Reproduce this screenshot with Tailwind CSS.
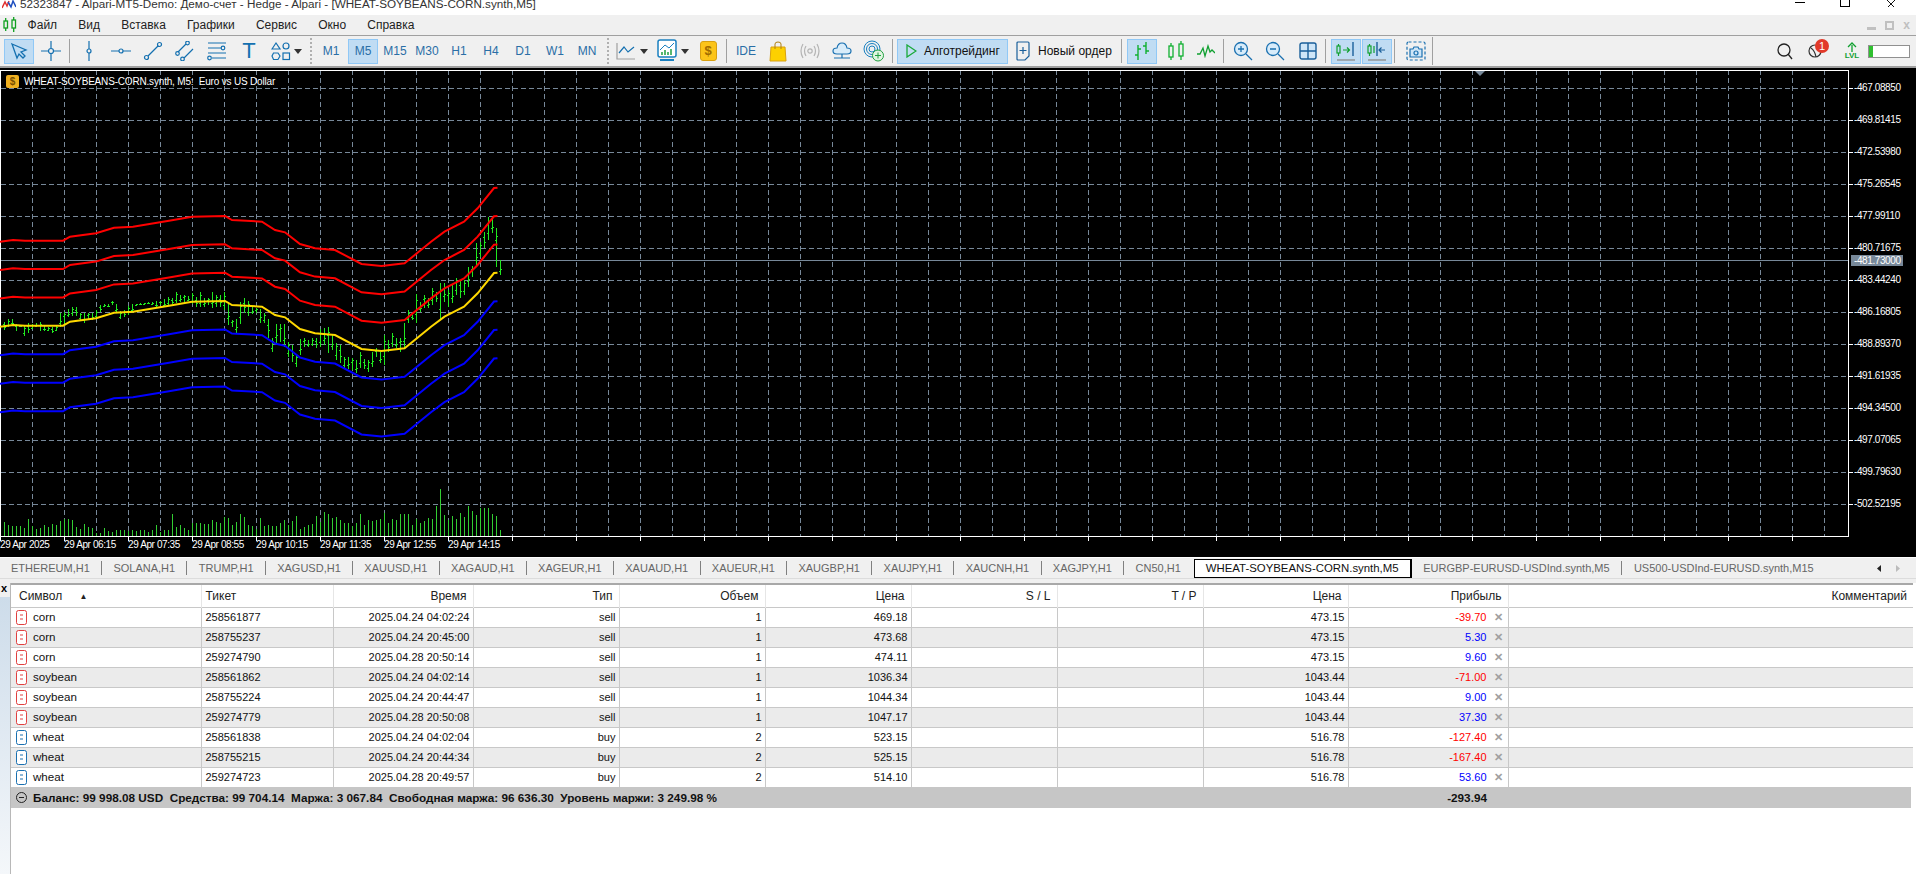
<!DOCTYPE html>
<html lang="ru">
<head>
  <meta charset="UTF-8" />
  <title>Alpari MT5 - WHEAT-SOYBEANS-CORN</title>
  <script src="https://cdn.jsdelivr.net/npm/@tailwindcss/browser@4"></script>
</head>
<body class="w-[1916px] h-[874px] overflow-hidden bg-white text-[#111] text-[11px] font-['Liberation_Sans',sans-serif] flex flex-col">

  <!-- Title bar (cut off at the top) -->
  <div class="h-[15px] shrink-0 relative overflow-hidden flex items-start pl-[2px]">
    <svg class="w-[14px] h-[10px] -mt-px" viewBox="0 0 14 10" fill="none" stroke-width="1.5"><path d="M0 9L3 3L5 7L7 2" stroke="#e03030"/><path d="M6 3L9 8L11 2L14 8" stroke="#2050c0"/></svg>
    <span class="ml-[4px] -mt-[3px] text-[11.7px] leading-[14px] text-[#333] whitespace-nowrap">52323847 - Alpari-MT5-Demo: Демо-счет - Hedge - Alpari - [WHEAT-SOYBEANS-CORN.synth,M5]</span>
    <div class="absolute top-0 left-[1795px] w-[10px] h-px mt-[2px] bg-black"></div>
    <div class="absolute top-0 left-[1840px] w-[10px] h-[7px] border border-t-0 border-black"></div>
    <svg class="absolute top-0 left-[1886px] w-[10px] h-[8px]" viewBox="0 0 10 8" stroke="#111"><path d="M1 0L8 7M9 0L2 7"/></svg>
  </div>

  <!-- Menu -->
  <div class="h-[21px] shrink-0 bg-[#f0f0f0] border-b border-[#a0a0a0] flex items-center relative text-[12px] text-[#222]">
    <svg class="w-[16px] h-[16px] ml-[2px]" viewBox="0 0 16 16" fill="none" stroke="#10a020" stroke-width="1.3"><rect x="2" y="4" width="3.5" height="7"/><path d="M3.7 1V4M3.7 11V14"/><rect x="10" y="3" width="3.5" height="8"/><path d="M11.7 0V3M11.7 11V15"/></svg>
    <div class="flex ml-[-1px]">
      <span class="px-[10.6px]">Файл</span>
      <span class="px-[10.6px]">Вид</span>
      <span class="px-[10.6px]">Вставка</span>
      <span class="px-[10.6px]">Графики</span>
      <span class="px-[10.6px]">Сервис</span>
      <span class="px-[10.6px]">Окно</span>
      <span class="px-[10.6px]">Справка</span>
    </div>
    <div class="ml-auto mr-[6px] flex items-center gap-[9px]">
      <div class="w-[9px] h-[3px] bg-[#c0c0c0] mt-[6px]"></div>
      <div class="w-[9px] h-[9px] border-2 border-[#c0c0c0]"></div>
      <span class="font-bold text-[#c0c0c0]">x</span>
    </div>
  </div>

  <!-- Toolbar -->
  <div class="h-[30px] shrink-0 bg-[#f0f0f0] flex items-center pl-[4px] text-[#2a6ea6] text-[12px]">
    <button class="w-[30px] h-[25px] mr-[2px] flex items-center justify-center bg-[#c0dcf3] border border-[#90c8f6]">
      <svg class="w-[20px] h-[20px]" viewBox="0 0 20 20" fill="none" stroke="#1470b0" stroke-width="1.3"><path d="M3 3L17 9L12 11L16 15L14 17L10 13L8 17Z"/></svg>
    </button>
    <button class="w-[30px] h-[25px] mr-[2px] flex items-center justify-center">
      <svg class="w-[20px] h-[20px]" viewBox="0 0 20 20" fill="none" stroke="#1470b0" stroke-width="1.2"><path d="M10 0V7M10 13V20M0 10H7M13 10H20"/><circle cx="10" cy="10" r="2.5"/></svg>
    </button>
    <div class="ml-px mr-[4px] w-px h-[24px] bg-[#a0a0a0]"></div>
    <button class="w-[30px] h-[25px] mr-[2px] flex items-center justify-center">
      <svg class="w-[20px] h-[20px]" viewBox="0 0 20 20" fill="none" stroke="#1470b0" stroke-width="1.2"><path d="M10 0V8M10 12V20"/><circle cx="10" cy="10" r="2"/></svg>
    </button>
    <button class="w-[30px] h-[25px] mr-[2px] flex items-center justify-center">
      <svg class="w-[20px] h-[20px]" viewBox="0 0 20 20" fill="none" stroke="#1470b0" stroke-width="1.2"><path d="M0 10H8M12 10H20"/><circle cx="10" cy="10" r="2"/></svg>
    </button>
    <button class="w-[30px] h-[25px] mr-[2px] flex items-center justify-center">
      <svg class="w-[20px] h-[20px]" viewBox="0 0 20 20" fill="none" stroke="#1470b0" stroke-width="1.2"><path d="M5 15L15 5"/><circle cx="3.5" cy="16.5" r="2"/><circle cx="16.5" cy="3.5" r="2"/></svg>
    </button>
    <button class="w-[30px] h-[25px] mr-[2px] flex items-center justify-center">
      <svg class="w-[20px] h-[20px]" viewBox="0 0 20 20" fill="none" stroke="#1470b0" stroke-width="1.2"><path d="M3 11L11 3M9 17L18 8"/><circle cx="2.5" cy="12.5" r="1.8"/><circle cx="12.5" cy="2" r="1.8"/><circle cx="7.5" cy="18" r="1.8"/></svg>
    </button>
    <button class="w-[30px] h-[25px] mr-[2px] flex items-center justify-center">
      <svg class="w-[20px] h-[20px]" viewBox="0 0 20 20" fill="none" stroke="#1470b0" stroke-width="1.2"><path d="M1 2H19M1 7H14M1 12H19M5 17H19"/><circle cx="16" cy="7" r="1.8"/><circle cx="2.5" cy="17" r="1.8"/></svg>
    </button>
    <button class="w-[30px] h-[25px] mr-[2px] flex items-center justify-center text-[22px] font-light text-[#1470b0] leading-none">T</button>
    <button class="w-[30px] h-[25px] flex items-center justify-center">
      <svg class="w-[20px] h-[20px]" viewBox="0 0 20 20" fill="none" stroke="#1470b0" stroke-width="1.2"><path d="M5 2L9 8H1Z"/><circle cx="15" cy="5" r="3"/><path d="M2.5 12H7L9 15L7 18.5H2.5L1 15Z"/><rect x="12" y="12" width="6.5" height="6.5"/></svg>
    </button>
    <svg class="w-[8px] h-[5px] -ml-[2px]" viewBox="0 0 8 5" fill="#333"><path d="M0 0H8L4 5Z"/></svg>
    <div class="ml-[8px] w-[2px] h-[26px] border-l-2 border-dotted border-[#b0b0b0]"></div>

    <div class="ml-[4px] flex font-medium">
      <button class="w-[30px] h-[25px] mr-[2px]">M1</button>
      <button class="w-[30px] h-[25px] mr-[2px] bg-[#c0dcf3] border border-[#90c8f6]">M5</button>
      <button class="w-[30px] h-[25px] mr-[2px]">M15</button>
      <button class="w-[30px] h-[25px] mr-[2px]">M30</button>
      <button class="w-[30px] h-[25px] mr-[2px]">H1</button>
      <button class="w-[30px] h-[25px] mr-[2px]">H4</button>
      <button class="w-[30px] h-[25px] mr-[2px]">D1</button>
      <button class="w-[30px] h-[25px] mr-[2px]">W1</button>
      <button class="w-[30px] h-[25px] mr-[2px]">MN</button>
    </div>
    <div class="ml-[3px] w-[2px] h-[26px] border-l-2 border-dotted border-[#b0b0b0]"></div>

    <button class="ml-[2px] w-[30px] h-[25px] flex items-center justify-center">
      <svg class="w-[20px] h-[20px]" viewBox="0 0 20 20" fill="none" stroke-width="1.2"><path d="M1 2V18H19" stroke="#a0a0a0"/><path d="M3 12L8 6L12 11L18 6" stroke="#1470b0"/></svg>
    </button>
    <svg class="w-[8px] h-[5px] -ml-[1px]" viewBox="0 0 8 5" fill="#333"><path d="M0 0H8L4 5Z"/></svg>
    <button class="ml-[4px] w-[30px] h-[25px] flex items-center justify-center">
      <svg class="w-[22px] h-[24px]" viewBox="0 0 22 24" fill="none"><rect x="2" y="1" width="18" height="17" rx="2" fill="#fff" stroke="#1a80c0" stroke-width="1.5"/><path d="M4 11L9 6L13 9L18 4" stroke="#1a80c0"/><path d="M6 16V13M9 16V11M12 16V13M15 16V10" stroke="#20a040" stroke-width="1.5"/><path d="M4 21H18" stroke="#1a80c0" stroke-width="2"/></svg>
    </button>
    <svg class="w-[8px] h-[5px] -ml-[1px]" viewBox="0 0 8 5" fill="#333"><path d="M0 0H8L4 5Z"/></svg>
    <button class="ml-[4px] mr-[2px] w-[30px] h-[25px] flex items-center justify-center">
      <span class="w-[17px] h-[20px] rounded-[3px] bg-[#fcc419] border border-[#d8a010] text-[#a06a00] font-bold text-[13px] leading-[18px]">$</span>
    </button>
    <div class="ml-px mr-[4px] w-px h-[24px] bg-[#a0a0a0]"></div>

    <button class="w-[30px] h-[25px] mr-[2px] font-medium">IDE</button>
    <button class="w-[30px] h-[25px] mr-[2px] flex items-center justify-center">
      <svg class="w-[18px] h-[21px]" viewBox="0 0 18 21" fill="none"><path d="M2 6H16L17 20H1Z" fill="#fdd000" stroke="#d8a010"/><path d="M6 8V3Q6 1 9 1T12 3V8" stroke="#b08010"/></svg>
    </button>
    <button class="w-[30px] h-[25px] mr-[2px] flex items-center justify-center">
      <svg class="w-[20px] h-[20px]" viewBox="0 0 20 20" fill="none" stroke="#b4b4b4" stroke-width="1.2"><circle cx="10" cy="10" r="2.2"/><path d="M6 5Q3 10 6 15M14 5Q17 10 14 15M3 3Q-1 10 3 17M17 3Q21 10 17 17"/></svg>
    </button>
    <button class="w-[30px] h-[25px] mr-[2px] flex items-center justify-center">
      <svg class="w-[20px] h-[20px]" viewBox="0 0 20 20" fill="#d8ecfa" stroke="#1a70b0" stroke-width="1.2"><path d="M5 13Q1 13 1 10T5 7Q6 2 10 2T15 7Q19 7 19 10T15 13Z"/><path d="M10 13V17M2 17H18" fill="none"/></svg>
    </button>
    <button class="w-[30px] h-[25px] mr-[2px] flex items-center justify-center">
      <svg class="w-[22px] h-[22px]" viewBox="0 0 22 22" fill="none" stroke="#1a80c0"><circle cx="9" cy="9" r="8"/><circle cx="9" cy="9" r="5.5"/><circle cx="9" cy="9" r="3"/><circle cx="15" cy="15.5" r="5.5" fill="#e0f5e0" stroke="#20a040"/><path d="M15 12.5V18.5M12 15.5H18" stroke="#20a040"/></svg>
    </button>
    <div class="ml-px mr-[4px] w-px h-[24px] bg-[#a0a0a0]"></div>

    <button class="w-[111px] h-[25px] flex items-center bg-[#c0dcf3] border border-[#90c8f6] pl-[8px] text-[#111] gap-[7px]">
      <svg class="w-[11px] h-[14px] shrink-0" viewBox="0 0 11 14" fill="none" stroke="#18a838" stroke-width="1.3"><path d="M1 1L10 7L1 13Z"/></svg>
      Алготрейдинг
    </button>
    <button class="ml-[4px] w-[104px] h-[25px] flex items-center pl-[4px] text-[#111] gap-[8px]">
      <svg class="w-[14px] h-[20px] shrink-0" viewBox="0 0 14 20" fill="none" stroke="#1a5f9a" stroke-width="1.2"><path d="M1 2Q1 1 2 1H12Q13 1 13 2V15L9 19H2Q1 19 1 18Z"/><path d="M7 6V13M3.5 9.500H10.500"/></svg>
      Новый ордер
    </button>
    <div class="ml-[5px] w-px h-[24px] bg-[#a0a0a0]"></div>

    <button class="ml-[5px] mr-[2px] w-[30px] h-[25px] flex items-center justify-center bg-[#c0dcf3] border border-[#90c8f6]">
      <svg class="w-[18px] h-[20px]" viewBox="0 0 18 20" fill="none" stroke="#10b030" stroke-width="1.4"><path d="M5 4V19M5 8H8M2 14H5M13 1V13M10 5H13M13 10H16"/></svg>
    </button>
    <button class="ml-[2px] w-[30px] h-[25px] flex items-center justify-center">
      <svg class="w-[18px] h-[20px]" viewBox="0 0 18 20" fill="none" stroke="#10b030" stroke-width="1.3"><rect x="2" y="5" width="4" height="11"/><path d="M4 2V5M4 16V19"/><rect x="12" y="3" width="4" height="12"/><path d="M14 0V3M14 15V19"/></svg>
    </button>
    <button class="w-[30px] h-[25px] mr-[2px] flex items-center justify-center">
      <svg class="w-[18px] h-[14px]" viewBox="0 0 18 14" fill="none" stroke="#10a030" stroke-width="1.3"><path d="M0 10H3L6 4L8 12L11 2L13 8L15 6L18 9"/></svg>
    </button>
    <div class="w-px h-[24px] bg-[#a0a0a0]"></div>

    <button class="ml-[4px] mr-[2px] w-[30px] h-[25px] flex items-center justify-center">
      <svg class="w-[20px] h-[20px]" viewBox="0 0 20 20" fill="#d8ecfa" stroke="#1a70b0" stroke-width="1.3"><circle cx="8" cy="8" r="6.500"/><path d="M8 5V11M5 8H11M13 13L19 19" fill="none"/></svg>
    </button>
    <button class="w-[30px] h-[25px] mr-[2px] flex items-center justify-center">
      <svg class="w-[20px] h-[20px]" viewBox="0 0 20 20" fill="#d8ecfa" stroke="#1a70b0" stroke-width="1.3"><circle cx="8" cy="8" r="6.500"/><path d="M5 8H11M13 13L19 19" fill="none"/></svg>
    </button>
    <button class="ml-px mr-[2px] w-[30px] h-[25px] flex items-center justify-center">
      <svg class="w-[18px] h-[18px]" viewBox="0 0 18 18" fill="#cfe6f8" stroke="#1a5f9a" stroke-width="1.4"><rect x="1" y="1" width="16" height="16" rx="2"/><path d="M9 1V17M1 9H17" fill="none"/></svg>
    </button>
    <div class="w-px h-[24px] bg-[#a0a0a0]"></div>

    <button class="ml-[5px] w-[30px] h-[25px] flex items-center justify-center bg-[#c0dcf3] border border-[#90c8f6]">
      <svg class="w-[20px] h-[20px]" viewBox="0 0 20 20" fill="none" stroke-width="1.2"><rect x="1" y="5" width="3" height="7" stroke="#10a030"/><path d="M2.500 3V5M2.500 12V15" stroke="#10a030"/><path d="M7 9H13M11 6.500L13.500 9L11 11.500" stroke="#10a030"/><path d="M17 1V15" stroke="#1a5f9a" stroke-width="1.4"/><path d="M1 19H19" stroke="#909090" stroke-width="1.4"/></svg>
    </button>
    <button class="ml-px mr-[2px] w-[30px] h-[25px] flex items-center justify-center bg-[#c0dcf3] border border-[#90c8f6]">
      <svg class="w-[20px] h-[20px]" viewBox="0 0 20 20" fill="none" stroke-width="1.2"><rect x="1" y="5" width="3" height="7" stroke="#10a030"/><path d="M2.500 3V5M2.500 12V15M7 5V12" stroke="#10a030"/><path d="M10 1V15" stroke="#1a5f9a" stroke-width="1.4"/><path d="M18 9H12M14.500 6.500L12 9L14.500 11.500" stroke="#1a5f9a"/><path d="M1 19H19" stroke="#909090" stroke-width="1.4"/></svg>
    </button>
    <div class="w-px h-[24px] bg-[#a0a0a0]"></div>

    <button class="ml-[6px] w-[30px] h-[25px] flex items-center justify-center">
      <svg class="w-[20px] h-[20px]" viewBox="0 0 20 20" fill="none" stroke="#1a70b0" stroke-width="1.2"><rect x="1" y="1" width="18" height="18" rx="1.500" stroke-dasharray="3 2"/><path d="M4 8H7L8 6H12L13 8H16V16H4Z" fill="#cfe6f8"/><circle cx="10" cy="12" r="2"/></svg>
    </button>
    <div class="ml-px w-px h-[28px] bg-[#a0a0a0]"></div>

    <div class="ml-auto flex items-center pr-[6px]">
      <button class="w-[30px] h-[25px] flex items-center justify-center">
        <svg class="w-[16px] h-[17px]" viewBox="0 0 16 17" fill="none" stroke="#222" stroke-width="1.3"><circle cx="7" cy="7" r="6"/><path d="M11 11L15 16"/></svg>
      </button>
      <div class="w-[30px] h-[25px] flex items-center justify-center relative">
        <svg class="w-[14px] h-[14px]" viewBox="0 0 14 14" fill="none" stroke="#333" stroke-width="1.2"><circle cx="7" cy="7" r="6"/><path d="M3 4Q7 7 8 13"/></svg>
        <span class="absolute left-[15px] top-0 w-[14px] h-[14px] rounded-full bg-[#e23a2a] text-white text-[11px] leading-[14px] text-center">1</span>
      </div>
      <div class="ml-[7px] w-[30px] flex flex-col items-center text-[#10a030] text-[8px] leading-[8px] font-bold">
        <svg class="w-[10px] h-[10px]" viewBox="0 0 10 10" fill="none" stroke="#10a030" stroke-width="1.3"><path d="M5 10V3M1 5L5 1L9 5"/></svg>
        LVL
      </div>
      <div class="ml-px w-[42px] h-[13px] bg-white border border-[#909090] flex">
        <div class="w-[4px] bg-[#30c030]"></div>
      </div>
    </div>
  </div>
  <div class="h-[2px] shrink-0 bg-[#a0a0a0]"></div>

  <!-- Chart -->
  <div class="h-[489px] shrink-0 bg-black relative overflow-hidden text-white text-[10px] tracking-[-0.4px]">
    <svg id="chart" class="absolute inset-0" width="1916" height="489" viewBox="0 68 1916 489" fill="none"></svg>

    <div class="absolute left-[6px] top-[6px] flex items-center gap-[5px] text-[10px] tracking-[-0.18px]">
      <span class="w-[13px] h-[13px] rounded-[2px] bg-[#f0b020] text-[#7a5000] text-[10px] leading-[13px] text-center font-bold">$</span>
      <span class="whitespace-pre">WHEAT-SOYBEANS-CORN.synth, M5:  Euro vs US Dollar</span>
    </div>

    <!-- Price axis -->
    <div class="absolute left-[1854px] top-[4px] flex flex-col leading-[32px]">
      <span class="h-[32px]">-467.08850</span>
      <span class="h-[32px]">-469.81415</span>
      <span class="h-[32px]">-472.53980</span>
      <span class="h-[32px]">-475.26545</span>
      <span class="h-[32px]">-477.99110</span>
      <span class="h-[32px]">-480.71675</span>
      <span class="h-[32px]">-483.44240</span>
      <span class="h-[32px]">-486.16805</span>
      <span class="h-[32px]">-488.89370</span>
      <span class="h-[32px]">-491.61935</span>
      <span class="h-[32px]">-494.34500</span>
      <span class="h-[32px]">-497.07065</span>
      <span class="h-[32px]">-499.79630</span>
      <span class="h-[32px]">-502.52195</span>
    </div>
    <div class="absolute left-[1851px] top-[187px] w-[52px] h-[11px] bg-[#778899] leading-[11px] pl-[3px]">-481.73000</div>

    <!-- Time axis -->
    <div class="absolute left-0 top-[470px] flex leading-[14px]">
      <span class="w-[64px]">29 Apr 2025</span>
      <span class="w-[64px]">29 Apr 06:15</span>
      <span class="w-[64px]">29 Apr 07:35</span>
      <span class="w-[64px]">29 Apr 08:55</span>
      <span class="w-[64px]">29 Apr 10:15</span>
      <span class="w-[64px]">29 Apr 11:35</span>
      <span class="w-[64px]">29 Apr 12:55</span>
      <span class="w-[64px]">29 Apr 14:15</span>
    </div>
  </div>
  <div class="h-px shrink-0 bg-white"></div>

  <!-- Chart tabs -->
  <div class="h-[20px] shrink-0 bg-[#f0f0f0] flex items-center relative text-[#666]">
    <span class="pl-[11px] pr-[11.3px] border-r border-[#808080] leading-[14px]">ETHEREUM,H1</span>
    <span class="px-[11.3px] border-r border-[#808080] leading-[14px]">SOLANA,H1</span>
    <span class="px-[11.3px] border-r border-[#808080] leading-[14px]">TRUMP,H1</span>
    <span class="px-[11.3px] border-r border-[#808080] leading-[14px]">XAGUSD,H1</span>
    <span class="px-[11.3px] border-r border-[#808080] leading-[14px]">XAUUSD,H1</span>
    <span class="px-[11.3px] border-r border-[#808080] leading-[14px]">XAGAUD,H1</span>
    <span class="px-[11.3px] border-r border-[#808080] leading-[14px]">XAGEUR,H1</span>
    <span class="px-[11.3px] border-r border-[#808080] leading-[14px]">XAUAUD,H1</span>
    <span class="px-[11.3px] border-r border-[#808080] leading-[14px]">XAUEUR,H1</span>
    <span class="px-[11.3px] border-r border-[#808080] leading-[14px]">XAUGBP,H1</span>
    <span class="px-[11.3px] border-r border-[#808080] leading-[14px]">XAUJPY,H1</span>
    <span class="px-[11.3px] border-r border-[#808080] leading-[14px]">XAUCNH,H1</span>
    <span class="px-[11.3px] border-r border-[#808080] leading-[14px]">XAGJPY,H1</span>
    <span class="pl-[11.3px] pr-[13px] leading-[14px]">CN50,H1</span>
    <span class="self-start mt-px h-[19px] px-[11px] bg-white border border-black border-r-2 text-[#111] text-[11.4px] leading-[16px]">WHEAT-SOYBEANS-CORN.synth,M5</span>
    <span class="pl-[11.6px] pr-[11.3px] border-r border-[#808080] leading-[14px]">EURGBP-EURUSD-USDInd.synth,M5</span>
    <span class="px-[12px] leading-[14px]">US500-USDInd-EURUSD.synth,M15</span>
    <div class="absolute left-[1877px] top-[7px] flex gap-[15px]">
      <svg class="w-[4px] h-[7px]" viewBox="0 0 4 7" fill="#222"><path d="M4 0V7L0 3.500Z"/></svg>
      <svg class="w-[4px] h-[7px]" viewBox="0 0 4 7" fill="#bbb"><path d="M0 0V7L4 3.500Z"/></svg>
    </div>
  </div>
  <div class="h-[5px] shrink-0 bg-[#f0f0f0] border-t border-[#dcdcdc]"></div>

  <!-- Trade panel -->
  <div class="flex-1 flex min-h-0 pr-[3px]">
    <div class="w-[11px] shrink-0 flex flex-col border-r border-[#b8b8b8]">
      <div class="h-[14px] bg-[#f0f0f0] text-black font-bold text-[11px] leading-[10px] pl-px">x</div>
      <div class="flex-1 bg-gradient-to-b from-[#cddcea] to-[#f4f7fa]"></div>
    </div>
    <div class="flex-1 min-w-0 border-t-2 border-[#a8a8a8]">
      <table class="table-fixed w-[1902px]">
        <colgroup>
          <col class="w-[190px]" /><col class="w-[132px]" /><col class="w-[140px]" /><col class="w-[146px]" /><col class="w-[146px]" /><col class="w-[146px]" /><col class="w-[146px]" /><col class="w-[146px]" /><col class="w-[145px]" /><col class="w-[160px]" /><col />
        </colgroup>
        <thead>
          <tr class="h-[22px] text-[#222] text-[12px] *:font-normal *:pr-[6px] *:text-right *:border-r *:border-[#e6e6e6] *:leading-[14px] *:pt-px">
            <th class="text-left! pl-[8px]">Символ <span class="text-[8px] ml-[14px] align-[1px]">▲</span></th>
            <th class="text-left! pl-[4px]">Тикет</th>
            <th>Время</th>
            <th>Тип</th>
            <th>Объем</th>
            <th>Цена</th>
            <th>S / L</th>
            <th>T / P</th>
            <th>Цена</th>
            <th>Прибыль</th>
            <th class="border-r-0!">Комментарий</th>
          </tr>
        </thead>
        <tbody class="*:h-[20px] *:border-t *:border-[#c8c8c8] *:even:bg-[#ebebeb] [&_td]:border-r [&_td]:border-[#c8c8c8] [&_td]:text-right [&_td]:pr-[3px] [&_td]:leading-[14px] [&_td:last-child]:border-r-0">
          <tr>
            <td class="text-left! pl-[5px]"><span class="flex items-center gap-[6px] text-[11.6px]"><svg class="w-[11px] h-[15px]" viewBox="0 0 11 15" fill="#fff" stroke="#e04040"><rect x=".5" y=".5" width="10" height="14" rx="2"/><path d="M4 5H7M4 9H7"/></svg>corn</span></td>
            <td class="text-left! pl-[4px]">258561877</td><td>2025.04.24 04:02:24</td><td>sell</td><td>1</td><td>469.18</td><td></td><td></td><td>473.15</td>
            <td class="pr-[21px]! text-[#ff0000] relative">-39.70<span class="absolute right-[5px] text-[#a0a0a0] font-bold">✕</span></td><td></td>
          </tr>
          <tr>
            <td class="text-left! pl-[5px]"><span class="flex items-center gap-[6px] text-[11.6px]"><svg class="w-[11px] h-[15px]" viewBox="0 0 11 15" fill="#fff" stroke="#e04040"><rect x=".5" y=".5" width="10" height="14" rx="2"/><path d="M4 5H7M4 9H7"/></svg>corn</span></td>
            <td class="text-left! pl-[4px]">258755237</td><td>2025.04.24 20:45:00</td><td>sell</td><td>1</td><td>473.68</td><td></td><td></td><td>473.15</td>
            <td class="pr-[21px]! text-[#0000ff] relative">5.30<span class="absolute right-[5px] text-[#a0a0a0] font-bold">✕</span></td><td></td>
          </tr>
          <tr>
            <td class="text-left! pl-[5px]"><span class="flex items-center gap-[6px] text-[11.6px]"><svg class="w-[11px] h-[15px]" viewBox="0 0 11 15" fill="#fff" stroke="#e04040"><rect x=".5" y=".5" width="10" height="14" rx="2"/><path d="M4 5H7M4 9H7"/></svg>corn</span></td>
            <td class="text-left! pl-[4px]">259274790</td><td>2025.04.28 20:50:14</td><td>sell</td><td>1</td><td>474.11</td><td></td><td></td><td>473.15</td>
            <td class="pr-[21px]! text-[#0000ff] relative">9.60<span class="absolute right-[5px] text-[#a0a0a0] font-bold">✕</span></td><td></td>
          </tr>
          <tr>
            <td class="text-left! pl-[5px]"><span class="flex items-center gap-[6px] text-[11.6px]"><svg class="w-[11px] h-[15px]" viewBox="0 0 11 15" fill="#fff" stroke="#e04040"><rect x=".5" y=".5" width="10" height="14" rx="2"/><path d="M4 5H7M4 9H7"/></svg>soybean</span></td>
            <td class="text-left! pl-[4px]">258561862</td><td>2025.04.24 04:02:14</td><td>sell</td><td>1</td><td>1036.34</td><td></td><td></td><td>1043.44</td>
            <td class="pr-[21px]! text-[#ff0000] relative">-71.00<span class="absolute right-[5px] text-[#a0a0a0] font-bold">✕</span></td><td></td>
          </tr>
          <tr>
            <td class="text-left! pl-[5px]"><span class="flex items-center gap-[6px] text-[11.6px]"><svg class="w-[11px] h-[15px]" viewBox="0 0 11 15" fill="#fff" stroke="#e04040"><rect x=".5" y=".5" width="10" height="14" rx="2"/><path d="M4 5H7M4 9H7"/></svg>soybean</span></td>
            <td class="text-left! pl-[4px]">258755224</td><td>2025.04.24 20:44:47</td><td>sell</td><td>1</td><td>1044.34</td><td></td><td></td><td>1043.44</td>
            <td class="pr-[21px]! text-[#0000ff] relative">9.00<span class="absolute right-[5px] text-[#a0a0a0] font-bold">✕</span></td><td></td>
          </tr>
          <tr>
            <td class="text-left! pl-[5px]"><span class="flex items-center gap-[6px] text-[11.6px]"><svg class="w-[11px] h-[15px]" viewBox="0 0 11 15" fill="#fff" stroke="#e04040"><rect x=".5" y=".5" width="10" height="14" rx="2"/><path d="M4 5H7M4 9H7"/></svg>soybean</span></td>
            <td class="text-left! pl-[4px]">259274779</td><td>2025.04.28 20:50:08</td><td>sell</td><td>1</td><td>1047.17</td><td></td><td></td><td>1043.44</td>
            <td class="pr-[21px]! text-[#0000ff] relative">37.30<span class="absolute right-[5px] text-[#a0a0a0] font-bold">✕</span></td><td></td>
          </tr>
          <tr>
            <td class="text-left! pl-[5px]"><span class="flex items-center gap-[6px] text-[11.6px]"><svg class="w-[11px] h-[15px]" viewBox="0 0 11 15" fill="#fff" stroke="#1a70b0"><rect x=".5" y=".5" width="10" height="14" rx="2"/><path d="M4 5H7M4 9H7"/></svg>wheat</span></td>
            <td class="text-left! pl-[4px]">258561838</td><td>2025.04.24 04:02:04</td><td>buy</td><td>2</td><td>523.15</td><td></td><td></td><td>516.78</td>
            <td class="pr-[21px]! text-[#ff0000] relative">-127.40<span class="absolute right-[5px] text-[#a0a0a0] font-bold">✕</span></td><td></td>
          </tr>
          <tr>
            <td class="text-left! pl-[5px]"><span class="flex items-center gap-[6px] text-[11.6px]"><svg class="w-[11px] h-[15px]" viewBox="0 0 11 15" fill="#fff" stroke="#1a70b0"><rect x=".5" y=".5" width="10" height="14" rx="2"/><path d="M4 5H7M4 9H7"/></svg>wheat</span></td>
            <td class="text-left! pl-[4px]">258755215</td><td>2025.04.24 20:44:34</td><td>buy</td><td>2</td><td>525.15</td><td></td><td></td><td>516.78</td>
            <td class="pr-[21px]! text-[#ff0000] relative">-167.40<span class="absolute right-[5px] text-[#a0a0a0] font-bold">✕</span></td><td></td>
          </tr>
          <tr>
            <td class="text-left! pl-[5px]"><span class="flex items-center gap-[6px] text-[11.6px]"><svg class="w-[11px] h-[15px]" viewBox="0 0 11 15" fill="#fff" stroke="#1a70b0"><rect x=".5" y=".5" width="10" height="14" rx="2"/><path d="M4 5H7M4 9H7"/></svg>wheat</span></td>
            <td class="text-left! pl-[4px]">259274723</td><td>2025.04.28 20:49:57</td><td>buy</td><td>2</td><td>514.10</td><td></td><td></td><td>516.78</td>
            <td class="pr-[21px]! text-[#0000ff] relative">53.60<span class="absolute right-[5px] text-[#a0a0a0] font-bold">✕</span></td><td></td>
          </tr>
        </tbody>
      </table>
      <!-- Account summary -->
      <div class="h-[21px] w-[1900px] bg-[#c6c6c6] flex items-center font-bold relative pl-[5px] text-[11.75px]">
        <svg class="w-[11px] h-[11px]" viewBox="0 0 11 11" fill="none" stroke="#222"><circle cx="5.500" cy="5.500" r="5"/><path d="M3 5.500H8"/></svg>
        <span class="ml-[6px] whitespace-pre">Баланс: 99 998.08 USD  Средства: 99 704.14  Маржа: 3 067.84  Свободная маржа: 96 636.30  Уровень маржи: 3 249.98 %</span>
        <span class="absolute right-[424px]">-293.94</span>
      </div>
    </div>
  </div>

  <script>
    // draws the grid, indicator bands, price bars and volumes on the svg
    const svg = document.getElementById('chart');
    let out = '';

    let grid = '';
    for (let x = 32; x < 1848; x += 32) grid += `M${x + .5} 70V536`;
    for (let y = 88; y <= 504; y += 32) grid += `M1 ${y + .5}H1848`;
    out += `<path d="${grid}" stroke="#778899" stroke-dasharray="5 3" shape-rendering="crispEdges"/>`;
    out += `<path d="M1 260.500H1848" stroke="#778899" shape-rendering="crispEdges"/>`;

    // frame and axis ticks
    let frame = 'M.5 70.500H1848.500V536.500H.5Z';
    for (let y = 88; y <= 504; y += 32) frame += `M1849 ${y + .5}H1853`;
    for (let x = 0; x < 1848; x += 64) frame += `M${x + .5} 537V541`;
    out += `<path d="${frame}" stroke="#fff" shape-rendering="crispEdges"/>`;
    out += `<path d="M1475 71H1485L1480 76Z" fill="#778899"/>`;

    // volumes
    const vols = [14,11,10,10,10,8,17,10,7,8, 11,9,12,11,15,17,17,16,9,7, 12,9,8,3,3,8,5,4,6,6, 6,5,6,5,6,6,4,6,11,4,
      6,6,22,9,11,8,6,13,13,13, 12,12,16,14,13,19,18,11,14,22, 19,11,10,7,18,10,11,10,10,13, 16,11,15,20,7,9,11,12,20,14,
      24,22,18,19,16,13,13,10,13,22, 11,16,15,16,17,23,13,17,16,22, 22,22,11,17,13,15,18,17,30,47, 21,16,20,17,23,19,30,25,21,28,28,28,22,20,6];
    out += `<path d="${vols.map((v, i) => `M${4.5 + 4 * i} 536V${536 - v}`).join('')}" stroke="#32cd32" shape-rendering="crispEdges"/>`;

    // bars: high/low read off the reference, in 3x crop pixels
    const bars = [455,480,448,470,448,465,462,482,465,472,468,498,458,490,462,478,458,470,456,482,466,484,470,482,472,490,468,482,
      428,470,425,462,418,442,412,438,412,438,428,450,428,458,428,450,428,450,420,446,404,425,402,412,402,410,394,405,402,430,422,448,420,442,
      408,435,402,425,402,408,400,406,398,404,395,403,395,404,392,412,392,405,388,410,382,405,385,402,365,398,375,396,375,395,378,392,370,402,
      380,412,365,412,385,412,385,405,365,415,375,410,375,412,365,420,395,465,450,472,448,490,395,462,385,430,392,438,410,432,415,430,418,458,
      428,458,448,505,505,545,462,520,462,515,462,530,515,560,525,575,555,590,508,555,505,530,510,530,505,528,505,535,478,530,475,525,472,550,
      495,540,520,570,525,580,560,595,560,598,565,600,570,610,545,595,568,598,570,605,545,590,535,560,545,580,495,585,510,545,490,530,505,535,
      505,545,460,535,420,460,435,450,372,460,395,425,375,415,385,415,355,405,365,395,338,450,340,395,360,410,345,400,325,375,330,385,330,375,
      290,350,288,320,220,292,215,262,185,235,140,210,140,190,175,290,270,315];
    let bd = '';
    for (let i = 0; i < bars.length / 2; i++) {
      const x = 4.5 + 4 * i;
      const hi = Math.round(170 + bars[2 * i] / 3), lo = Math.round(170 + bars[2 * i + 1] / 3);
      const o = hi + Math.round((lo - hi) * (i % 3 ? .7 : .3)), c = hi + Math.round((lo - hi) * (i % 2 ? .2 : .6));
      bd += `M${x} ${hi}V${lo}M${x - 1.5} ${o + .5}H${x}M${x} ${c + .5}H${x + 1.5}`;
    }
    out += `<path d="${bd}" stroke="#20e820" shape-rendering="crispEdges"/>`;

    // seven bands share one shape, only shifted
    const band = '0,241.7 13,240 25,240.7 63,240.7 70,236.7 96,233.3 114,227.7 133,226.7 169,220.7 192,216.7 225,216 232,220 262,221.7 275,230 285,232.3 300,244 315,248.3 335,250 361.5,264 381.5,266 404.6,263.3 431,241.7 444.5,231.7 464,221.7 477.6,208.3 494,188 497.5,187.7';
    [[0, '#ff0000'], [28.3, '#ff0000'], [56.7, '#ff0000'], [85, '#ffd800'], [113.5, '#0000ff'], [142, '#0000ff'], [170.5, '#0000ff']].forEach(([dy, col]) => {
      out += `<polyline points="${band}" transform="translate(0 ${dy})" stroke="${col}" stroke-width="2"/>`;
    });

    svg.innerHTML = out;
  </script>
</body>
</html>
